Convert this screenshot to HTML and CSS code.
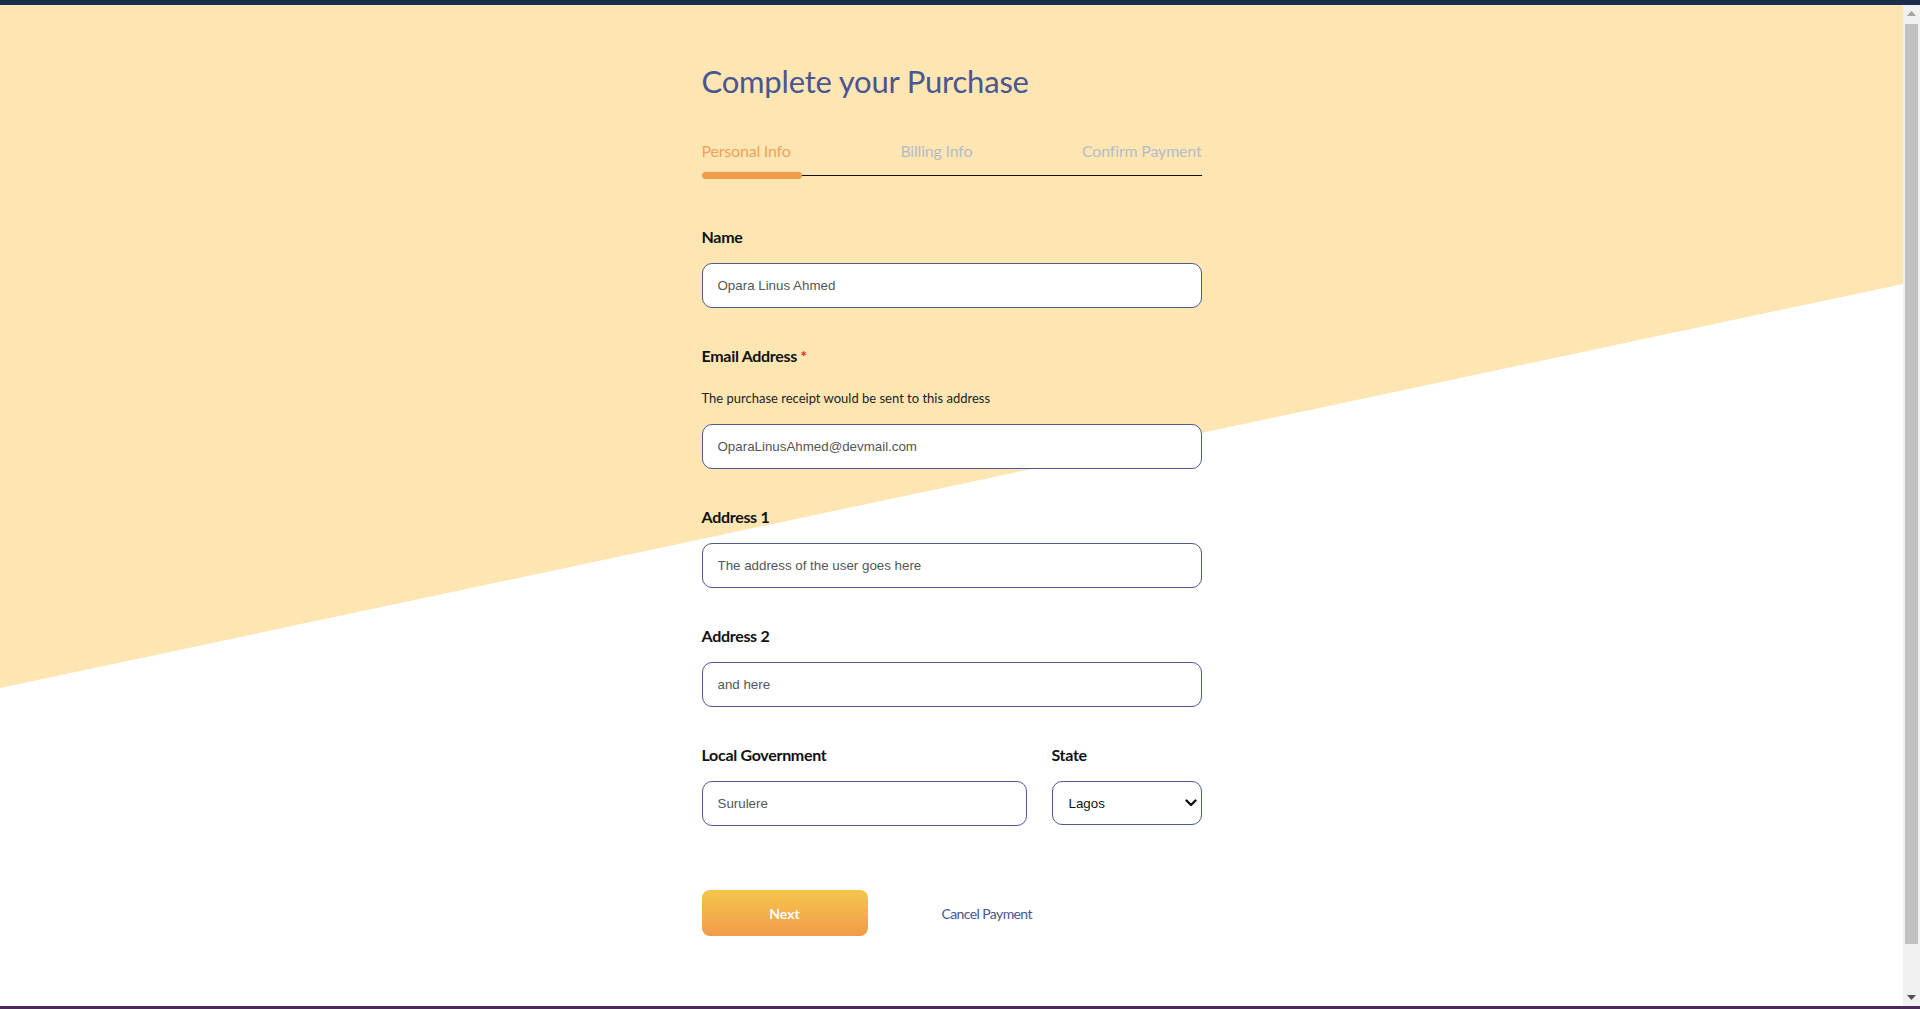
FILE: index.html
```html
<!DOCTYPE html>
<html lang="en">
<head>
<meta charset="utf-8">
<title>Complete your Purchase</title>
<link rel="stylesheet" href="styles.css">
</head>
<body>
<div class="frame">
  <div class="topbar"></div>
  <div class="viewport">
    <main class="page">
      <div class="backdrop"></div>
      <div class="checkout">
        <h1 class="title">Complete your Purchase</h1>
        <nav class="steps">
          <div class="step-labels">
            <span class="step active">Personal Info</span>
            <span class="step">Billing Info</span>
            <span class="step">Confirm Payment</span>
          </div>
          <div class="track"><div class="track-fill"></div></div>
        </nav>

        <form class="form">
          <div class="field first">
            <label class="label" for="name">Name</label>
            <input class="input" id="name" type="text" placeholder="Opara Linus Ahmed">
          </div>
          <div class="field">
            <label class="label" for="email">Email Address <span class="req">*</span></label>
            <p class="hint">The purchase receipt would be sent to this address</p>
            <input class="input hinted" id="email" type="email" placeholder="OparaLinusAhmed@devmail.com">
          </div>
          <div class="field">
            <label class="label" for="addr1">Address 1</label>
            <input class="input" id="addr1" type="text" placeholder="The address of the user goes here">
          </div>
          <div class="field">
            <label class="label" for="addr2">Address 2</label>
            <input class="input" id="addr2" type="text" placeholder="and here">
          </div>
          <div class="field row">
            <div class="col">
              <label class="label" for="lga">Local Government</label>
              <input class="input" id="lga" type="text" placeholder="Surulere">
            </div>
            <div class="col">
              <label class="label" for="state">State</label>
              <div class="select-wrap">
                <select class="select" id="state">
                  <option>Lagos</option>
                  <option>Abuja</option>
                  <option>Oyo</option>
                </select>
                <svg class="chevron" width="12" height="8" viewBox="0 0 12 8"><path d="M1.5 1.5 L6 6 L10.5 1.5" fill="none" stroke="#111" stroke-width="2.4" stroke-linecap="round" stroke-linejoin="round"/></svg>
              </div>
            </div>
          </div>
          <div class="actions">
            <button class="btn-next" type="button">Next</button>
            <button class="btn-cancel" type="button">Cancel Payment</button>
          </div>
        </form>
      </div>
    </main>
    <div class="scrollbar" aria-hidden="true">
      <div class="sb-btn"><svg width="9" height="5" viewBox="0 0 9 5"><path d="M0 5 L4.5 0 L9 5 Z" fill="#a3a3a3"/></svg></div>
      <div class="sb-track"><div class="sb-thumb"></div></div>
      <div class="sb-btn"><svg width="9" height="5" viewBox="0 0 9 5"><path d="M0 0 L4.5 5 L9 0 Z" fill="#505050"/></svg></div>
    </div>
  </div>
  <div class="bottombar"></div>
</div>
</body>
</html>
```
FILE: styles.css
```css
* { box-sizing: border-box; }
html, body { margin: 0; padding: 0; height: 100%; overflow: hidden; }
body {
  font-family: Lato, "Open Sans", sans-serif;
  background: #ffffff;
  color: #111;
}
.frame { display: flex; flex-direction: column; height: 100vh; }
.topbar { height: 5px; flex: none; background: #1c2c4c; }
.bottombar { height: 3px; flex: none; background: #4b2a5a; }
.viewport { flex: 1; display: flex; min-height: 0; }
.page { position: relative; flex: 1; overflow: hidden; }
.scrollbar {
  flex: none;
  width: 17px;
  background: #f1f1f1;
  display: flex;
  flex-direction: column;
}
.sb-btn {
  height: 17px;
  flex: none;
  display: flex;
  align-items: center;
  justify-content: center;
}
.sb-track { flex: 1; padding: 2px 2px 0; display: flex; flex-direction: column; }
.sb-thumb { height: 920px; background: #c1c1c1; }
.backdrop {
  position: absolute;
  top: 0; left: 0; right: 0;
  height: 683px;
  background: #fee6b3;
  clip-path: polygon(0 0, 100% 0, 100% 279px, 0 683px);
  z-index: 0;
}
.checkout {
  position: relative;
  z-index: 1;
  width: 500px;
  margin: 0 auto;
  padding-top: 57px;
}
.title {
  margin: 0;
  font-size: 31px;
  line-height: 38px;
  letter-spacing: -0.2px;
  font-weight: 400;
  color: #4a5592;
}
.steps { margin-top: 41px; }
.step-labels {
  display: flex;
  justify-content: space-between;
  font-size: 16px;
  line-height: 19px;
  letter-spacing: -0.2px;
}
.step { color: #b7bbc8; }
.step.active { color: #f4a05a; }
.track { position: relative; margin-top: 12px; height: 7px; }
.track::before {
  content: "";
  position: absolute;
  left: 0; right: 0; top: 3px;
  height: 1px;
  background: #111;
}
.track-fill {
  position: relative;
  width: 100px;
  height: 7px;
  border-radius: 4px;
  background: #f39c4c;
}
.form { display: flex; flex-direction: column; }
.field { margin-top: 38px; display: flex; flex-direction: column; }
.field.first { margin-top: 48px; }
.label {
  display: block;
  font-size: 16px;
  line-height: 19px;
  font-weight: 700;
  letter-spacing: -0.3px;
  color: #111;
}
.req { color: #e3262c; font-size: 15px; }
.hint {
  margin: 24px 0 0;
  font-size: 13px;
  line-height: 16px;
  color: #222;
}
.input, .select {
  margin-top: 17px;
  height: 45px;
  width: 100%;
  border: 1px solid #4f5a8f;
  border-radius: 10px;
  background: #fff;
  padding: 0 15px;
  font-family: "Liberation Sans", Arial, sans-serif;
  font-size: 13.33px;
  color: #111;
  outline: none;
}
.input.hinted { margin-top: 18px; }
.input::placeholder { color: #555; opacity: 1; }
.row {
  display: grid;
  grid-template-columns: 325px 150px;
  column-gap: 25px;
}
.col { display: flex; flex-direction: column; }
.select-wrap { position: relative; margin-top: 17px; }
.select {
  margin-top: 0;
  height: 44px;
  padding-left: 16px;
  appearance: none;
  -webkit-appearance: none;
  color: #111;
}
.chevron { position: absolute; right: 5px; top: 18px; pointer-events: none; }
.actions {
  margin-top: 64px;
  display: flex;
  align-items: center;
}
.btn-next {
  width: 166px;
  height: 46px;
  border: none;
  border-radius: 8px;
  background: linear-gradient(to bottom, #f4c64b, #f29b4b);
  color: #fff;
  font-family: Lato, sans-serif;
  font-weight: 700;
  font-size: 14px;
}
.btn-cancel {
  margin-left: 74px;
  border: none;
  background: none;
  padding: 0;
  color: #4a5592;
  font-family: Lato, sans-serif;
  font-size: 14px;
  letter-spacing: -0.6px;
}
```
